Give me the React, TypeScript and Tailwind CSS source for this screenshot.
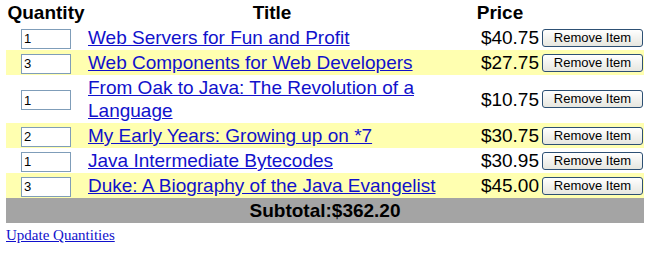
const items = [
  { qty: "1", title: "Web Servers for Fun and Profit", price: "$40.75" },
  { qty: "3", title: "Web Components for Web Developers", price: "$27.75" },
  { qty: "1", title: "From Oak to Java: The Revolution of a Language", price: "$10.75" },
  { qty: "2", title: "My Early Years: Growing up on *7", price: "$30.75" },
  { qty: "1", title: "Java Intermediate Bytecodes", price: "$30.95" },
  { qty: "3", title: "Duke: A Biography of the Java Evangelist", price: "$45.00" },
];

const ShoppingCart = () => {
  return (
    <div className="bg-white w-[651px] h-[254px] font-['Liberation_Sans',Arial,sans-serif] text-black">
      <table className="ml-[6px] w-[638px] table-fixed border-collapse text-[19px] leading-[23px]">
        <colgroup>
          <col className="w-[80px]" />
          <col className="w-[372px]" />
          <col className="w-[84px]" />
          <col className="w-[102px]" />
        </colgroup>
        <thead>
          <tr>
            <th className="py-px font-bold text-center">Quantity</th>
            <th className="py-px font-bold text-center">Title</th>
            <th className="py-px font-bold text-center">Price</th>
            <th className="py-px"></th>
          </tr>
        </thead>
        <tbody>
          {items.map((item, index) => (
            <tr key={index} className={index % 2 === 1 ? "bg-[#ffffb0]" : ""}>
              <td className="py-px text-center align-middle">
                <input
                  type="text"
                  defaultValue={item.qty}
                  className="w-[50px] h-[20px] border border-[#7f9db9] bg-white px-[2px] text-[13px] leading-[16px] font-['Liberation_Sans',Arial,sans-serif] align-middle"
                />
              </td>
              <td className="py-px pl-[2px] align-middle">
                <a href="#" className="text-[#1111cc] underline">
                  {item.title}
                </a>
              </td>
              <td className="py-px pr-[3px] text-right align-middle whitespace-nowrap">{item.price}</td>
              <td className="py-px align-middle">
                <button className="block w-[101px] h-[18px] rounded-[3px] border border-[#2d5074] bg-gradient-to-b from-white to-[#e6e6df] text-[13px] leading-[14px] text-black font-['Liberation_Sans',Arial,sans-serif]">
                  Remove Item
                </button>
              </td>
            </tr>
          ))}
          <tr className="bg-[#a4a4a4]">
            <td colSpan={4} className="py-px text-center font-bold">
              Subtotal:$362.20
            </td>
          </tr>
        </tbody>
      </table>
      <a
        href="#"
        className="ml-[6px] mt-[2px] inline-block text-[15px] leading-[18px] text-[#1111cc] underline font-['Liberation_Serif','Times_New_Roman',serif]"
      >
        Update Quantities
      </a>
    </div>
  );
};

export default function App() {
  return <ShoppingCart />;
}
